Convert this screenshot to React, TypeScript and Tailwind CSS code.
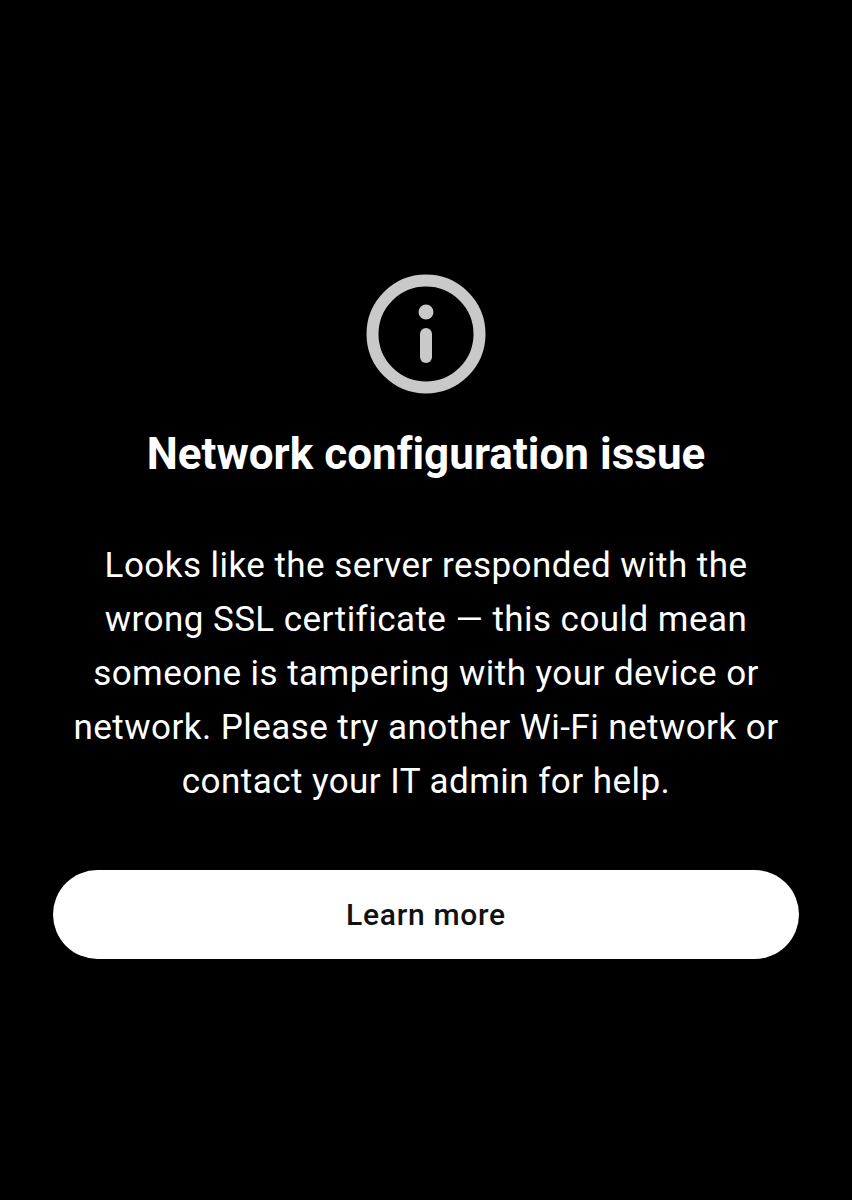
export default function App() {
  return (
    <div className="w-[852px] h-[1200px] bg-black flex flex-col items-center pt-[274px] font-['Roboto',sans-serif]">
      <svg width="120" height="120" viewBox="0 0 120 120" fill="none">
        <circle cx="60" cy="60" r="53.5" stroke="#c9c9c9" strokeWidth="12" />
        <circle cx="60" cy="38" r="7.5" fill="#c9c9c9" />
        <rect x="54" y="54" width="12" height="35" rx="6" fill="#c9c9c9" />
      </svg>
      <h1 className="mt-[35px] text-[44px] leading-[50px] font-bold tracking-[0.02px] text-white">Network configuration issue</h1>
      <p className="mt-[60px] w-[720px] text-center text-[35px] leading-[54px] tracking-[0.45px] text-white">
        Looks like the server responded with the wrong SSL certificate — this could mean someone is tampering with your device or network. Please try another Wi-Fi network or contact your IT admin for help.
      </p>
      <button className="mt-[61px] w-[746px] h-[89px] rounded-full bg-white text-[#111111] text-[30px] font-medium tracking-[0.7px]">Learn more</button>
    </div>
  );
}
